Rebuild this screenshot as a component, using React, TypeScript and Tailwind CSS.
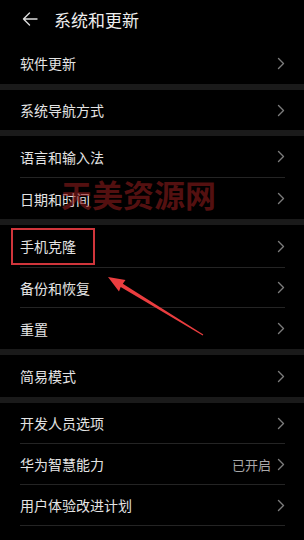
import React from "react";

const Chevron = () => (
  <svg width="8" height="13" viewBox="0 0 8 13" className="shrink-0">
    <path d="M1.5 1.5 L6.5 6.5 L1.5 11.5" fill="none" stroke="#7c7c7c" strokeWidth="1.4" strokeLinecap="round" strokeLinejoin="round" />
  </svg>
);

type RowProps = { label: string; h: string; divider?: boolean; value?: string };

const Row = ({ label, h, divider, value }: RowProps) => (
  <div className={`${h} pl-5 pr-[19px]`}>
    <div className={`h-full flex items-center justify-between ${divider ? "border-b border-[#242424]" : ""}`}>
      <span className="text-[14px] text-[#e4e4e4] leading-none">{label}</span>
      <div className="flex items-center gap-[6px]">
        {value && <span className="text-[13px] text-[#a8a8a8] leading-none">{value}</span>}
        <Chevron />
      </div>
    </div>
  </div>
);

const Band = () => <div className="h-[6px] bg-[#1a1a1a]" />;

export default function App() {
  return (
    <div
      className="relative w-[304px] h-[540px] bg-black overflow-hidden"
      style={{ fontFamily: '"Noto Sans CJK SC", "Noto Sans", sans-serif' }}
    >
      <div className="h-[42px] flex items-center pl-[22px]">
        <svg width="16" height="14" viewBox="0 0 16 14" className="mr-[16px] -mt-[4px]">
          <path d="M15 7 H1.5 M7.5 1 L1.5 7 L7.5 13" fill="none" stroke="#dcdcdc" strokeWidth="1.4" strokeLinecap="round" strokeLinejoin="round" />
        </svg>
        <span className="text-[17px] text-[#eeeeee] leading-none -mt-[4px]">系统和更新</span>
      </div>
      <Row label="软件更新" h="h-[42px]" />
      <Band />
      <Row label="系统导航方式" h="h-[40px]" />
      <Band />
      <Row label="语言和输入法" h="h-[42px]" divider />
      <Row label="日期和时间" h="h-[41px]" />
      <Band />
      <Row label="手机克隆" h="h-[43px]" divider />
      <Row label="备份和恢复" h="h-[40px]" divider />
      <Row label="重置" h="h-[41px]" />
      <Band />
      <Row label="简易模式" h="h-[42px]" />
      <Band />
      <Row label="开发人员选项" h="h-[41px]" divider />
      <Row label="华为智慧能力" h="h-[41px]" divider value="已开启" />
      <Row label="用户体验改进计划" h="h-[41px]" divider />

      {/* watermark */}
      <div className="absolute left-[61px] top-[178px] text-[31px] font-bold leading-none text-[rgba(140,28,28,0.6)] pointer-events-none">
        天美资源网
      </div>

      {/* highlight box */}
      <div className="absolute left-[11px] top-[228px] w-[84px] h-[37px] border-2 border-[#d0353b]" />

      {/* arrow */}
      <svg className="absolute left-0 top-0" width="304" height="540" viewBox="0 0 304 540">
        <polygon
          points="108,277 125.5,280 122.8,283.8 203.3,334.6 202.7,335.4 120.7,287 119,291.5"
          fill="#ea3d3f"
        />
      </svg>
    </div>
  );
}
